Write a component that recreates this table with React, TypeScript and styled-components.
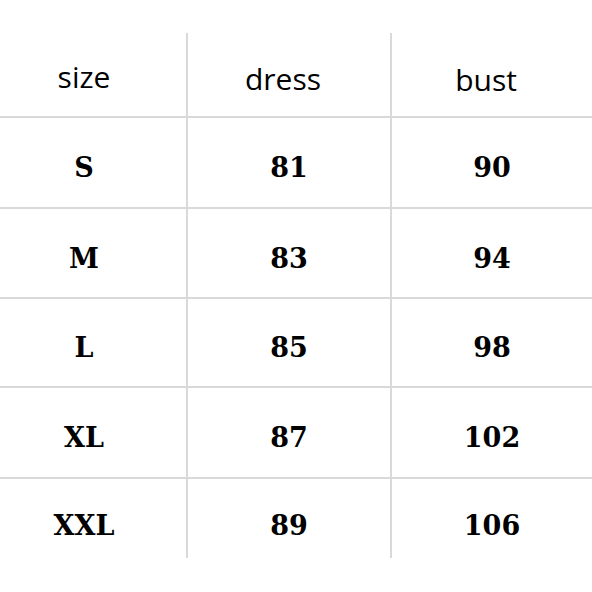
import React from "react";
import styled, { createGlobalStyle } from "styled-components";

const Global = createGlobalStyle`
  html, body { margin: 0; padding: 0; background: #ffffff; }
  body { width: 592px; height: 592px; overflow: hidden; }
`;

const Page = styled.div`
  width: 592px;
  height: 592px;
  padding-top: 33px;
  box-sizing: border-box;
  background: #ffffff;
`;

const Table = styled.div`
  display: flex;
  flex-direction: column;
  width: 592px;
`;

const Row = styled.div<{ $h: number; $top?: boolean }>`
  display: grid;
  grid-template-columns: 186px 204px 202px;
  height: ${(p) => p.$h}px;
  box-sizing: border-box;
  border-top: ${(p) => (p.$top ? "none" : "2px solid #d9d9d9")};
`;

const Cell = styled.div<{ $first?: boolean; $head?: boolean; $shift: number }>`
  display: flex;
  align-items: center;
  justify-content: center;
  box-sizing: border-box;
  border-left: ${(p) => (p.$first ? "none" : "2px solid #d9d9d9")};
  padding-top: ${(p) => p.$shift}px;
  padding-right: ${(p) => (p.$first ? 18 : p.$head ? 12 : 0)}px;
  color: #000;
  ${(p) =>
    p.$head
      ? `font-family: "Open Sans", "Noto Sans", sans-serif; font-size: 30px; font-weight: 400;`
      : `font-family: "DejaVu Serif", "Liberation Serif", serif; font-size: 27px; font-weight: 700;`}
`;

const rows = [
  { s: "S", d: "81", b: "90", h: 91, shift: 10 },
  { s: "M", d: "83", b: "94", h: 90, shift: 10 },
  { s: "L", d: "85", b: "98", h: 89, shift: 10 },
  { s: "XL", d: "87", b: "102", h: 91, shift: 10 },
  { s: "XXL", d: "89", b: "106", h: 81, shift: 14 },
];

export default function App() {
  return (
    <Page>
      <Global />
      <Table>
        <Row $h={83} $top>
          <Cell $first $head $shift={4}>size</Cell>
          <Cell $head $shift={8}>dress</Cell>
          <Cell $head $shift={10}>bust</Cell>
        </Row>
        {rows.map((r) => (
          <Row key={r.s} $h={r.h}>
            <Cell $first $shift={r.shift}>{r.s}</Cell>
            <Cell $shift={r.shift}>{r.d}</Cell>
            <Cell $shift={r.shift}>{r.b}</Cell>
          </Row>
        ))}
      </Table>
    </Page>
  );
}
